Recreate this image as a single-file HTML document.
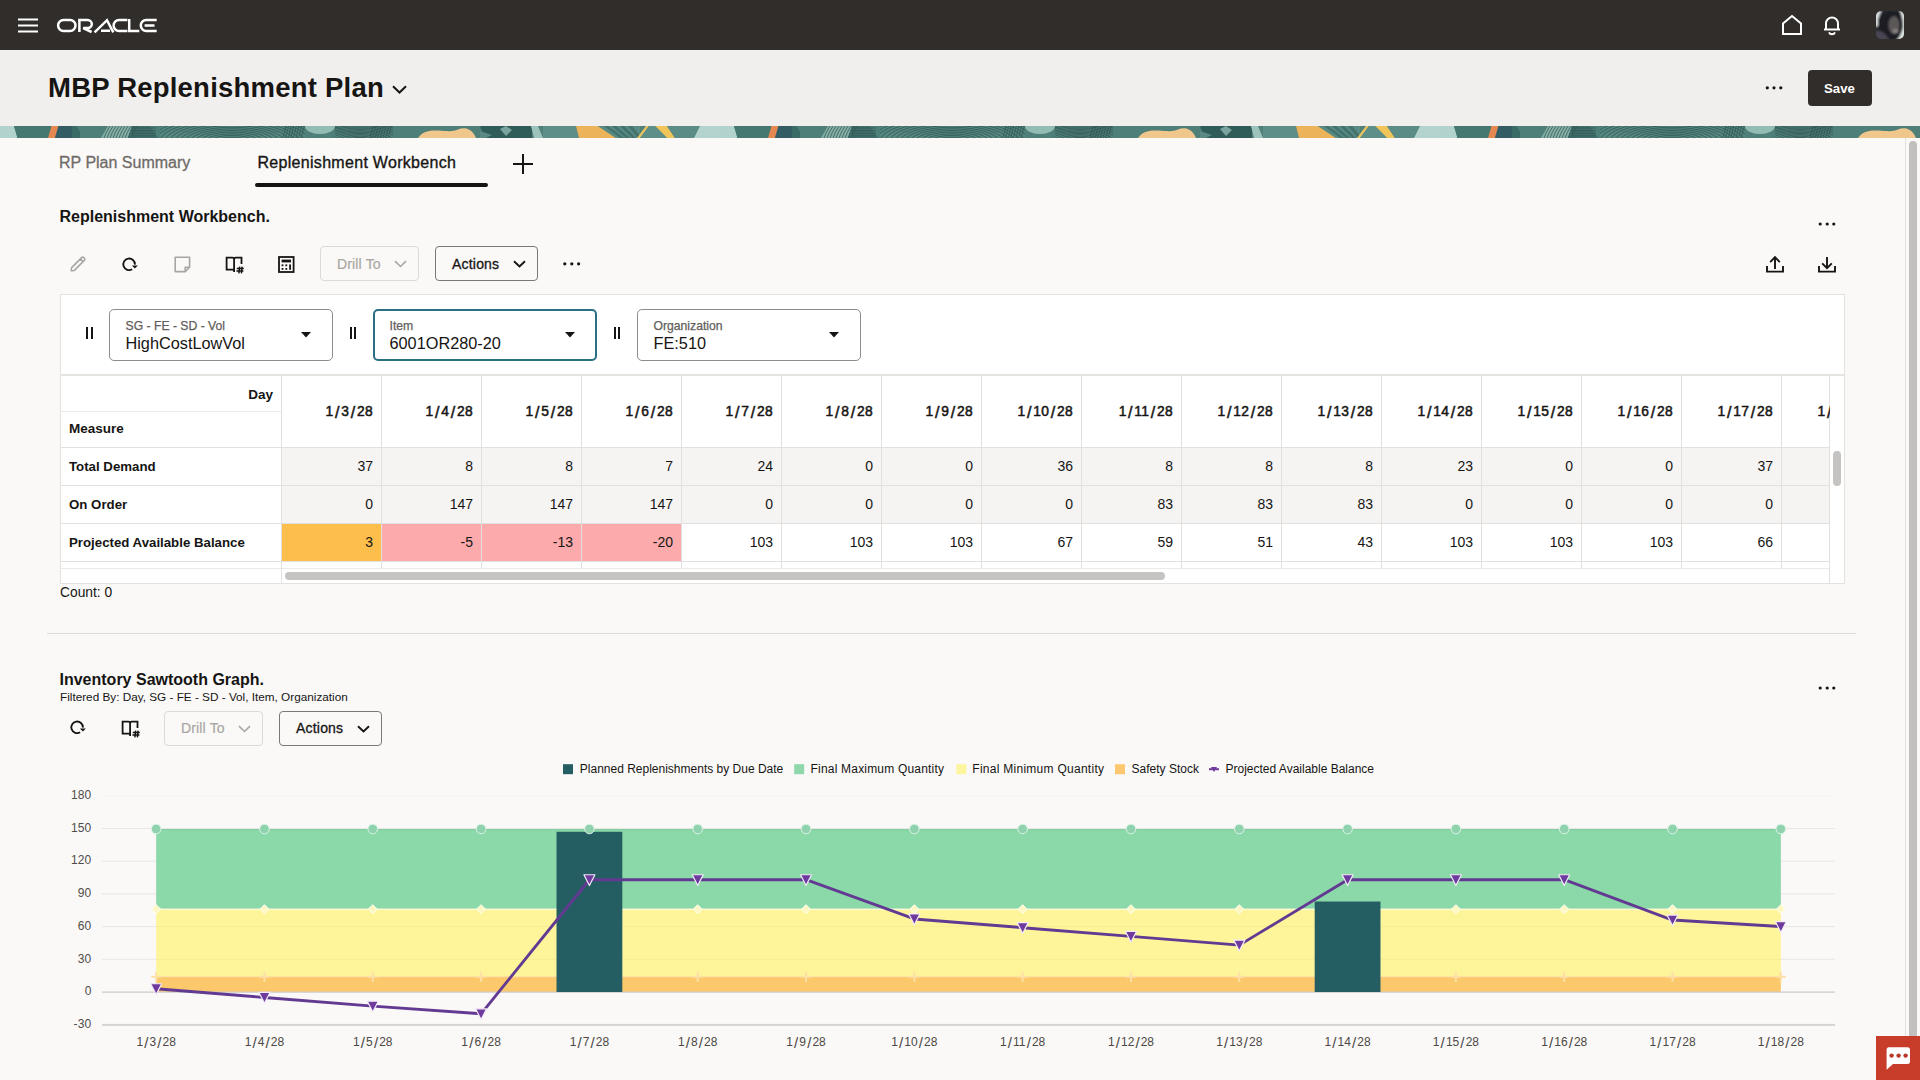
<!DOCTYPE html>
<html><head><meta charset="utf-8">
<style>
*{box-sizing:border-box}
html,body{margin:0;padding:0}
body{width:1920px;height:1080px;overflow:hidden;position:relative;background:#FAF9F8;font-family:"Liberation Sans",sans-serif;color:#161513}
.a{position:absolute}
.t{position:absolute;white-space:nowrap;line-height:1}
svg{position:absolute;overflow:visible}
</style></head><body>
<div class="a" style="left:0;top:0;width:1920px;height:50px;background:#312D2A"></div>
<svg style="left:18px;top:18px" width="20" height="14"><g fill="#fff"><rect x="0" y="0.5" width="20" height="2"/><rect x="0" y="6.5" width="20" height="2"/><rect x="0" y="12.5" width="20" height="2"/></g></svg>
<svg style="left:56px;top:19px" width="102" height="14" viewBox="0 0 102 14"><g fill="none" stroke="#fff" stroke-width="2.5">
<rect x="2.1" y="1.1" width="17.4" height="10.8" rx="5.4"/>
<path d="M23.4 13V1.1h8.4a4 4 0 0 1 0 8H27.2L35.6 13"/>
<path d="M38.6 13.3L51 1.2 57.3 13.3M45 11.8H54"/>
<path d="M71.4 1.1H63a5.4 5.4 0 0 0 0 10.8H71.4"/>
<path d="M73.2 0V11.9H83.3"/>
<path d="M100.7 1.1H90.2a5.4 5.4 0 0 0 0 10.8H100.7M88.6 6.6H98.5"/>
</g></svg>
<svg style="left:1782px;top:15px" width="20" height="20" viewBox="0 0 20 20"><path d="M1 8.5L10 1 19 8.5V19H1Z" fill="none" stroke="#fff" stroke-width="2"/></svg>
<svg style="left:1823px;top:15px" width="18" height="20" viewBox="0 0 18 20"><path d="M1 14.5h16M3 14.5V8.5a6 6 0 0 1 12 0v6" fill="none" stroke="#fff" stroke-width="2"/><path d="M6 17.3a3.3 3.3 0 0 0 6 0" fill="none" stroke="#fff" stroke-width="2"/></svg>
<div class="a" style="left:1876px;top:11px;width:28px;height:28px;border-radius:5px;overflow:hidden;background:#24252a"><svg style="left:0;top:0" width="28" height="28"><defs><filter id="av" x="-20%" y="-20%" width="140%" height="140%"><feGaussianBlur stdDeviation="1.1"/></filter></defs><g filter="url(#av)"><rect x="-2" y="-2" width="32" height="32" fill="#22232a"/><path d="M-2 0H6C3 3 2 9 2.5 15L-2 16Z" fill="#d9dfdf"/><path d="M23 -2H30V30H20C23 27 26 22 27 16C27 10 26 4 23 -2Z" fill="#dfe5e3"/><path d="M21 3C25.5 8 26 17 21.5 25" stroke="#1a1d24" stroke-width="2.4" fill="none"/><path d="M2 8C6 2 14 0 20 2C25 5 25 12 24 18C22 25 18 28 14 30H2Z" fill="#1a1d24"/><ellipse cx="18" cy="14" rx="5.5" ry="9" fill="#5d5859"/><ellipse cx="19.5" cy="20" rx="3" ry="2" fill="#8a8484"/><path d="M-2 20C4 18 10 22 14 30H-2Z" fill="#4a4552"/></g></svg></div>
<div class="a" style="left:0;top:50px;width:1920px;height:76px;background:#F1EFED"></div>
<div class="t" style="left:48px;top:74.12px;font-size:27.5px;color:#161513;font-weight:bold;letter-spacing:0.22px;">MBP Replenishment Plan</div>
<svg style="left:392px;top:85px" width="15" height="9" viewBox="0 0 15 9"><path d="M1 1.2l6.5 6.3 6.5-6.3" fill="none" stroke="#161513" stroke-width="2"/></svg>
<svg style="left:1765px;top:86px" width="18" height="4"><g fill="#161513"><circle cx="2.3" cy="1.8" r="1.6"/><circle cx="9" cy="1.8" r="1.6"/><circle cx="15.8" cy="1.8" r="1.6"/></g></svg>
<div class="a" style="left:1808px;top:70px;width:64px;height:36px;border-radius:4px;background:#312D2A"></div>
<div class="t" style="left:1824px;top:81.58px;font-size:13.2px;color:#fff;font-weight:bold;">Save</div>
<div class="a" id="banner" style="left:0;top:126px;width:1920px;height:11.5px;overflow:hidden;background:#4F7F79"><svg style="left:0;top:0" width="1920" height="12" viewBox="0 0 1920 12"><defs><g id="bp"><rect x="0" y="0" width="720" height="12" fill="#4E7F79"/>
<path d="M0,0 L14,0 L17.5,12 L0,12Z" fill="#B2D2CD" />
<path d="M14,0 L52,0 L48,12 L17.5,12Z" fill="#467872" />
<path d="M51.5,0 L58.5,0 L55,12 L48,12Z" fill="#E4884F" />
<path d="M58.5,0 L72,0 L72,12 L55,12Z" fill="#345C64" />
<path d="M72 0H76A10 12 0 0 1 80 12H72Z" fill="#3B6A67"/>
<path d="M108,0 L132,0 L128,12 L101,12Z" fill="#86AEA7" />
<path d="M132,0 L150,0 L158,12 L128,12Z" fill="#3F6E69" />
<clipPath id="fpA"><rect x="160" y="0" width="145" height="12"/></clipPath>
<clipPath id="fpB"><rect x="335" y="0" width="58" height="12"/></clipPath>
<clipPath id="fpC"><rect x="101" y="0" width="55" height="12"/></clipPath>
<rect x="160" y="0" width="145" height="12" fill="#56887F"/>
<rect x="335" y="0" width="58" height="12" fill="#56887F"/>
<g clip-path="url(#fpA)" fill="none" stroke="#2E5451" stroke-width="0.75"><ellipse cx="232" cy="17" rx="8" ry="2.6"/><ellipse cx="232" cy="17" rx="13" ry="4.3"/><ellipse cx="232" cy="17" rx="18" ry="5.9"/><ellipse cx="232" cy="17" rx="23" ry="7.6"/><ellipse cx="232" cy="17" rx="28" ry="9.2"/><ellipse cx="232" cy="17" rx="33" ry="10.9"/><ellipse cx="232" cy="17" rx="38" ry="12.5"/><ellipse cx="232" cy="17" rx="43" ry="14.2"/><ellipse cx="232" cy="17" rx="48" ry="15.8"/><ellipse cx="232" cy="17" rx="53" ry="17.5"/><ellipse cx="232" cy="17" rx="58" ry="19.1"/><ellipse cx="232" cy="17" rx="63" ry="20.8"/><ellipse cx="232" cy="17" rx="68" ry="22.4"/><ellipse cx="232" cy="17" rx="73" ry="24.1"/><ellipse cx="232" cy="17" rx="78" ry="25.7"/><ellipse cx="232" cy="17" rx="83" ry="27.4"/><ellipse cx="232" cy="17" rx="88" ry="29.0"/><path d="M286.0,0 L283.0,12"/><path d="M288.6,0 L285.6,12"/><path d="M291.2,0 L288.2,12"/><path d="M293.8,0 L290.8,12"/><path d="M296.4,0 L293.4,12"/><path d="M299.0,0 L296.0,12"/><path d="M301.6,0 L298.6,12"/><path d="M304.2,0 L301.2,12"/></g>
<g clip-path="url(#fpB)" fill="none" stroke="#2E5451" stroke-width="0.75"><ellipse cx="360" cy="16" rx="6" ry="2.0"/><ellipse cx="360" cy="16" rx="10" ry="3.3"/><ellipse cx="360" cy="16" rx="14" ry="4.6"/><ellipse cx="360" cy="16" rx="18" ry="5.9"/><ellipse cx="360" cy="16" rx="22" ry="7.3"/><ellipse cx="360" cy="16" rx="26" ry="8.6"/><ellipse cx="360" cy="16" rx="30" ry="9.9"/><ellipse cx="360" cy="16" rx="34" ry="11.2"/><ellipse cx="360" cy="16" rx="38" ry="12.5"/><ellipse cx="360" cy="16" rx="42" ry="13.9"/><ellipse cx="360" cy="16" rx="46" ry="15.2"/><ellipse cx="360" cy="16" rx="50" ry="16.5"/><ellipse cx="360" cy="16" rx="54" ry="17.8"/><ellipse cx="360" cy="16" rx="58" ry="19.1"/><path d="M373.0,0 L370.0,12"/><path d="M375.6,0 L372.6,12"/><path d="M378.2,0 L375.2,12"/><path d="M380.8,0 L377.8,12"/><path d="M383.4,0 L380.4,12"/><path d="M386.0,0 L383.0,12"/><path d="M388.6,0 L385.6,12"/><path d="M391.2,0 L388.2,12"/></g>
<g clip-path="url(#fpC)" fill="none" stroke="#2E5451" stroke-width="0.7"><path d="M110,0 Q106,6 104,12"/><path d="M113,0 Q109,6 107,12"/><path d="M116,0 Q112,6 110,12"/><path d="M119,0 Q115,6 113,12"/><path d="M122,0 Q118,6 116,12"/><path d="M125,0 Q121,6 119,12"/><path d="M128,0 Q124,6 122,12"/><path d="M131,0 Q127,6 125,12"/><path d="M134,0 Q130,6 128,12"/><path d="M137,0 Q133,6 131,12"/><path d="M132,2.0 H156"/><path d="M132,4.6 H156"/><path d="M132,7.2 H156"/><path d="M132,9.8 H156"/></g>
<path d="M305 0H335A15 8 0 0 1 305 0Z" fill="#92BCB4"/>
<path d="M418 12C422 6 428 4 438 4.5S452 6 458 3.5S472 2 476 12Z" fill="#EFC68B"/>
<path d="M480,0 L532,0 L532,12 L485,12Z" fill="#2F5C58" />
<path d="M500,3 L506,0 L512,4 L506,10Z" fill="#7BA49E" />
<path d="M480,5 L492,9 L486,12 L480,12Z" fill="#5B8A84" />
<path d="M531,0 L538,0 L543,12 L534,12Z" fill="#9EC2BC" />
<path d="M543,0 L576,0 L579,12 L543,12Z" fill="#5D8E88" />
<path d="M576,0 L598,0 L616,12 L579,12Z" fill="#ECB35A" />
<path d="M598,0 L640,0 L640,12 L616,12Z" fill="#5A8A84" />
<path d="M604,0 L608,0 L624,12 L620,12Z" fill="#44726D" />
<path d="M612,0 L616,0 L630,12 L626,12Z" fill="#44726D" />
<path d="M620,0 L624,0 L636,12 L632,12Z" fill="#44726D" />
<path d="M628,0 L632,0 L642,12 L638,12Z" fill="#44726D" />
<path d="M646,0 L649,0 L640,12 L637,12Z" fill="#EFC35E" />
<path d="M655,0 L667,0 L675,12 L667,12Z" fill="#F1C45C" />
<path d="M649,0 L655,0 L667,12 L640,12Z" fill="#5E8F89" />
<path d="M667,0 L700,0 L694,12 L675,12Z" fill="#5C8C86" />
<path d="M700,0 L720,0 L720,12 L694,12Z" fill="#B4D3CE" /></g></defs><use href="#bp"/><use href="#bp" x="720"/><use href="#bp" x="1440"/></svg></div>
<div class="t" style="left:59px;top:155.40px;font-size:16px;color:#6F6B68;-webkit-text-stroke:0.3px #6F6B68;">RP Plan Summary</div>
<div class="t" style="left:257.5px;top:155.40px;font-size:16px;color:#161513;letter-spacing:0.3px;-webkit-text-stroke:0.35px #161513;">Replenishment Workbench</div>
<div class="a" style="left:255px;top:183px;width:233px;height:3.5px;border-radius:2px;background:#161513"></div>
<svg style="left:513px;top:154px" width="20" height="20"><path d="M10 0V20M0 10H20" stroke="#161513" stroke-width="2"/></svg>
<div class="t" style="left:59.5px;top:208.60px;font-size:16px;color:#161513;font-weight:bold;">Replenishment Workbench.</div>
<svg style="left:1818px;top:222px" width="18" height="4"><g fill="#161513"><circle cx="2.2" cy="2" r="1.6"/><circle cx="9.2" cy="2" r="1.6"/><circle cx="15.8" cy="2" r="1.6"/></g></svg>
<svg style="left:68.5px;top:255px" width="18" height="18" viewBox="0 0 18 18"><path d="M2.2 15.8l0.4-3.2L12.6 2.6a1.5 1.5 0 0 1 2.1 0l0.7 0.7a1.5 1.5 0 0 1 0 2.1L5.4 15.4Z M11.3 3.9l2.8 2.8" fill="none" stroke="#A8A5A2" stroke-width="1.5" stroke-linejoin="round"/></svg>
<svg style="left:121px;top:257px" width="18" height="16" viewBox="0 0 18 16"><path d="M11.1 12.3A5.8 5.8 0 1 1 13.9 7.6" fill="none" stroke="#161513" stroke-width="1.9"/><path d="M10.9 8.4H16.9L13.9 11.6Z" fill="#161513"/></svg>
<svg style="left:173.5px;top:255.5px" width="18" height="18" viewBox="0 0 18 18"><path d="M1.2 1.2H15.6V11.2L11.2 15.6H1.2Z M15.6 11.2H11.2V15.6" fill="none" stroke="#A8A5A2" stroke-width="1.6" stroke-linejoin="round"/></svg>
<svg style="left:225px;top:255.5px" width="20" height="18" viewBox="0 0 20 18"><path d="M9.1 16.1V3.2Q9.1 1.6 7.5 1.6H1.6V13.6H7.5Q9.1 13.6 9.1 15.2M9.1 3.2Q9.1 1.6 10.7 1.6H16.5V8" fill="none" stroke="#161513" stroke-width="1.8"/><path d="M14.6 10.6l-0.7 6.7M17.1 10.6l-0.7 6.7M11.8 12.6H18.8M11.4 15H18.4" stroke="#161513" stroke-width="1.5"/></svg>
<svg style="left:278px;top:256px" width="17" height="17" viewBox="0 0 17 17"><rect x="1" y="1" width="14.6" height="15" fill="none" stroke="#161513" stroke-width="1.8"/><rect x="3.6" y="3.6" width="9.4" height="2.8" fill="#161513"/><g fill="#161513"><rect x="3.6" y="8.4" width="1.8" height="1.8"/><rect x="7.4" y="8.4" width="1.8" height="1.8"/><rect x="11.2" y="8.4" width="1.8" height="5.4"/><rect x="3.6" y="12" width="1.8" height="1.8"/><rect x="7.4" y="12" width="1.8" height="1.8"/></g></svg>
<div class="a" style="left:320px;top:246px;width:99px;height:35px;border:1px solid #DCD9D6;border-radius:4px;background:#FAF9F8"></div>
<div class="t" style="left:337px;top:256.80px;font-size:14px;color:#A9A6A3;letter-spacing:0.15px;-webkit-text-stroke:0.2px #A9A6A3;">Drill To</div>
<svg style="left:393.5px;top:260px" width="13" height="8"><path d="M1 1.2l5.5 5.3 5.5-5.3" fill="none" stroke="#A9A6A3" stroke-width="1.6"/></svg>
<div class="a" style="left:435px;top:246px;width:103px;height:35px;border:1px solid #7D7874;border-radius:4px;background:#FAF9F8"></div>
<div class="t" style="left:452px;top:256.80px;font-size:14px;color:#161513;letter-spacing:0.2px;-webkit-text-stroke:0.3px #161513;">Actions</div>
<svg style="left:512.5px;top:260px" width="13" height="8"><path d="M1 1.2l5.5 5.3 5.5-5.3" fill="none" stroke="#161513" stroke-width="1.9"/></svg>
<svg style="left:563px;top:262px" width="18" height="4"><g fill="#161513"><circle cx="1.8" cy="1.8" r="1.6"/><circle cx="8.8" cy="1.8" r="1.6"/><circle cx="15.6" cy="1.8" r="1.6"/></g></svg>
<svg style="left:1766px;top:256px" width="18" height="17" viewBox="0 0 18 17"><path d="M1 10V15.6H17V10" fill="none" stroke="#161513" stroke-width="1.9"/><path d="M9 13V2" stroke="#161513" stroke-width="1.9"/><path d="M4.2 6.2L9 1.2 13.8 6.2" fill="none" stroke="#161513" stroke-width="1.9"/></svg>
<svg style="left:1818px;top:256px" width="18" height="17" viewBox="0 0 18 17"><path d="M1 10V15.6H17V10" fill="none" stroke="#161513" stroke-width="1.9"/><path d="M9 1V12" stroke="#161513" stroke-width="1.9"/><path d="M4.2 7.4L9 12.2 13.8 7.4" fill="none" stroke="#161513" stroke-width="1.9"/></svg>
<div class="a" style="left:60px;top:294px;width:1785px;height:290px;background:#fff;border:1px solid #E4E2DF"></div>
<div class="a" style="left:61px;top:374px;width:1783px;height:2px;background:#E6E4E1"></div>
<div class="a" style="left:86px;top:327px;width:2px;height:12px;background:#161513"></div><div class="a" style="left:90.5px;top:327px;width:2px;height:12px;background:#161513"></div>
<div class="a" style="left:109px;top:309px;width:224px;height:52px;border:1px solid #8F8B87;border-radius:5px;background:#fff"></div>
<div class="t" style="left:125.5px;top:319.93px;font-size:12.2px;color:#625E5B;-webkit-text-stroke:0.25px #625E5B;">SG - FE - SD - Vol</div>
<div class="t" style="left:125.5px;top:335.14px;font-size:16.3px;color:#161513;">HighCostLowVol</div>
<svg style="left:301px;top:332px" width="10" height="6"><path d="M0 0H10L5 5.5Z" fill="#161513"/></svg>
<div class="a" style="left:349.5px;top:327px;width:2px;height:12px;background:#161513"></div><div class="a" style="left:354.0px;top:327px;width:2px;height:12px;background:#161513"></div>
<div class="a" style="left:373px;top:309px;width:224px;height:52px;border:2px solid #2B6F85;border-radius:5px;background:#fff"></div>
<div class="t" style="left:389.5px;top:319.93px;font-size:12.2px;color:#625E5B;-webkit-text-stroke:0.25px #625E5B;">Item</div>
<div class="t" style="left:389.5px;top:335.14px;font-size:16.3px;color:#161513;">6001OR280-20</div>
<svg style="left:565px;top:332px" width="10" height="6"><path d="M0 0H10L5 5.5Z" fill="#161513"/></svg>
<div class="a" style="left:613.5px;top:327px;width:2px;height:12px;background:#161513"></div><div class="a" style="left:618.0px;top:327px;width:2px;height:12px;background:#161513"></div>
<div class="a" style="left:637px;top:309px;width:224px;height:52px;border:1px solid #8F8B87;border-radius:5px;background:#fff"></div>
<div class="t" style="left:653.5px;top:319.93px;font-size:12.2px;color:#625E5B;-webkit-text-stroke:0.25px #625E5B;">Organization</div>
<div class="t" style="left:653.5px;top:335.14px;font-size:16.3px;color:#161513;">FE:510</div>
<svg style="left:829px;top:332px" width="10" height="6"><path d="M0 0H10L5 5.5Z" fill="#161513"/></svg>
<div class="a" style="left:61px;top:411px;width:220px;height:1px;background:#ECEAE8"></div>
<div class="t" style="left:-127px;width:400px;text-align:right;top:387.52px;font-size:13.5px;color:#161513;font-weight:bold;">Day</div>
<div class="t" style="left:69px;top:422.02px;font-size:13.5px;color:#161513;font-weight:bold;">Measure</div>
<div class="a" style="left:61px;top:376px;width:1769px;height:207px;overflow:hidden">
<div class="a" style="left:220px;top:71px;width:100px;height:38px;background:#F5F4F3"></div>
<div class="a" style="left:220px;top:109px;width:100px;height:38px;background:#F5F4F3"></div>
<div class="a" style="left:220px;top:147px;width:100px;height:38px;background:#FDBE4B"></div>
<div class="a" style="left:320px;top:71px;width:100px;height:38px;background:#F5F4F3"></div>
<div class="a" style="left:320px;top:109px;width:100px;height:38px;background:#F5F4F3"></div>
<div class="a" style="left:320px;top:147px;width:100px;height:38px;background:#FCAAAB"></div>
<div class="a" style="left:420px;top:71px;width:100px;height:38px;background:#F5F4F3"></div>
<div class="a" style="left:420px;top:109px;width:100px;height:38px;background:#F5F4F3"></div>
<div class="a" style="left:420px;top:147px;width:100px;height:38px;background:#FCAAAB"></div>
<div class="a" style="left:520px;top:71px;width:100px;height:38px;background:#F5F4F3"></div>
<div class="a" style="left:520px;top:109px;width:100px;height:38px;background:#F5F4F3"></div>
<div class="a" style="left:520px;top:147px;width:100px;height:38px;background:#FCAAAB"></div>
<div class="a" style="left:620px;top:71px;width:100px;height:38px;background:#F5F4F3"></div>
<div class="a" style="left:620px;top:109px;width:100px;height:38px;background:#F5F4F3"></div>
<div class="a" style="left:620px;top:147px;width:100px;height:38px;background:#FFFFFF"></div>
<div class="a" style="left:720px;top:71px;width:100px;height:38px;background:#F5F4F3"></div>
<div class="a" style="left:720px;top:109px;width:100px;height:38px;background:#F5F4F3"></div>
<div class="a" style="left:720px;top:147px;width:100px;height:38px;background:#FFFFFF"></div>
<div class="a" style="left:820px;top:71px;width:100px;height:38px;background:#F5F4F3"></div>
<div class="a" style="left:820px;top:109px;width:100px;height:38px;background:#F5F4F3"></div>
<div class="a" style="left:820px;top:147px;width:100px;height:38px;background:#FFFFFF"></div>
<div class="a" style="left:920px;top:71px;width:100px;height:38px;background:#F5F4F3"></div>
<div class="a" style="left:920px;top:109px;width:100px;height:38px;background:#F5F4F3"></div>
<div class="a" style="left:920px;top:147px;width:100px;height:38px;background:#FFFFFF"></div>
<div class="a" style="left:1020px;top:71px;width:100px;height:38px;background:#F5F4F3"></div>
<div class="a" style="left:1020px;top:109px;width:100px;height:38px;background:#F5F4F3"></div>
<div class="a" style="left:1020px;top:147px;width:100px;height:38px;background:#FFFFFF"></div>
<div class="a" style="left:1120px;top:71px;width:100px;height:38px;background:#F5F4F3"></div>
<div class="a" style="left:1120px;top:109px;width:100px;height:38px;background:#F5F4F3"></div>
<div class="a" style="left:1120px;top:147px;width:100px;height:38px;background:#FFFFFF"></div>
<div class="a" style="left:1220px;top:71px;width:100px;height:38px;background:#F5F4F3"></div>
<div class="a" style="left:1220px;top:109px;width:100px;height:38px;background:#F5F4F3"></div>
<div class="a" style="left:1220px;top:147px;width:100px;height:38px;background:#FFFFFF"></div>
<div class="a" style="left:1320px;top:71px;width:100px;height:38px;background:#F5F4F3"></div>
<div class="a" style="left:1320px;top:109px;width:100px;height:38px;background:#F5F4F3"></div>
<div class="a" style="left:1320px;top:147px;width:100px;height:38px;background:#FFFFFF"></div>
<div class="a" style="left:1420px;top:71px;width:100px;height:38px;background:#F5F4F3"></div>
<div class="a" style="left:1420px;top:109px;width:100px;height:38px;background:#F5F4F3"></div>
<div class="a" style="left:1420px;top:147px;width:100px;height:38px;background:#FFFFFF"></div>
<div class="a" style="left:1520px;top:71px;width:100px;height:38px;background:#F5F4F3"></div>
<div class="a" style="left:1520px;top:109px;width:100px;height:38px;background:#F5F4F3"></div>
<div class="a" style="left:1520px;top:147px;width:100px;height:38px;background:#FFFFFF"></div>
<div class="a" style="left:1620px;top:71px;width:100px;height:38px;background:#F5F4F3"></div>
<div class="a" style="left:1620px;top:109px;width:100px;height:38px;background:#F5F4F3"></div>
<div class="a" style="left:1620px;top:147px;width:100px;height:38px;background:#FFFFFF"></div>
<div class="a" style="left:1720px;top:71px;width:100px;height:38px;background:#F5F4F3"></div>
<div class="a" style="left:1720px;top:109px;width:100px;height:38px;background:#F5F4F3"></div>
<div class="a" style="left:1720px;top:147px;width:100px;height:38px;background:#FFFFFF"></div>
<div class="a" style="left:220px;top:0;width:1px;height:192px;background:#E2E0DE"></div>
<div class="a" style="left:320px;top:0;width:1px;height:192px;background:#E2E0DE"></div>
<div class="a" style="left:420px;top:0;width:1px;height:192px;background:#E2E0DE"></div>
<div class="a" style="left:520px;top:0;width:1px;height:192px;background:#E2E0DE"></div>
<div class="a" style="left:620px;top:0;width:1px;height:192px;background:#E2E0DE"></div>
<div class="a" style="left:720px;top:0;width:1px;height:192px;background:#E2E0DE"></div>
<div class="a" style="left:820px;top:0;width:1px;height:192px;background:#E2E0DE"></div>
<div class="a" style="left:920px;top:0;width:1px;height:192px;background:#E2E0DE"></div>
<div class="a" style="left:1020px;top:0;width:1px;height:192px;background:#E2E0DE"></div>
<div class="a" style="left:1120px;top:0;width:1px;height:192px;background:#E2E0DE"></div>
<div class="a" style="left:1220px;top:0;width:1px;height:192px;background:#E2E0DE"></div>
<div class="a" style="left:1320px;top:0;width:1px;height:192px;background:#E2E0DE"></div>
<div class="a" style="left:1420px;top:0;width:1px;height:192px;background:#E2E0DE"></div>
<div class="a" style="left:1520px;top:0;width:1px;height:192px;background:#E2E0DE"></div>
<div class="a" style="left:1620px;top:0;width:1px;height:192px;background:#E2E0DE"></div>
<div class="a" style="left:1720px;top:0;width:1px;height:192px;background:#E2E0DE"></div>
<div class="a" style="left:1820px;top:0;width:1px;height:192px;background:#E2E0DE"></div>
<div class="a" style="left:0;top:71px;width:1769px;height:1px;background:#E2E0DE"></div>
<div class="a" style="left:0;top:109px;width:1769px;height:1px;background:#E2E0DE"></div>
<div class="a" style="left:0;top:147px;width:1769px;height:1px;background:#E2E0DE"></div>
<div class="a" style="left:0;top:185px;width:1769px;height:1px;background:#E2E0DE"></div>
<div class="a" style="left:0;top:192px;width:1769px;height:1px;background:#E2E0DE"></div>
<div class="a" style="left:0;top:192px;width:1769px;height:1px;background:#ECEAE8"></div>
<div class="a" style="left:1768px;top:0;width:1px;height:207px;background:#E2E0DE"></div>
<div class="a" style="left:220px;top:0;width:1px;height:207px;background:#E2E0DE"></div>
</div>
<div class="a" style="left:281px;top:376px;width:1549px;height:192px;overflow:hidden">
<div class="t" style="left:-308px;width:400px;text-align:right;top:29.27px;font-size:13.8px;color:#161513;letter-spacing:0.3px;-webkit-text-stroke:0.5px #161513;">1<span style="font-size:16px;line-height:0;font-weight:normal;margin:0 1.5px;position:relative;top:1.6px">/</span>3<span style="font-size:16px;line-height:0;font-weight:normal;margin:0 1.5px;position:relative;top:1.6px">/</span>28</div>
<div class="t" style="left:-308px;width:400px;text-align:right;top:83.10px;font-size:14px;color:#161513;">37</div>
<div class="t" style="left:-308px;width:400px;text-align:right;top:121.10px;font-size:14px;color:#161513;">0</div>
<div class="t" style="left:-308px;width:400px;text-align:right;top:159.10px;font-size:14px;color:#161513;">3</div>
<div class="t" style="left:-208px;width:400px;text-align:right;top:29.27px;font-size:13.8px;color:#161513;letter-spacing:0.3px;-webkit-text-stroke:0.5px #161513;">1<span style="font-size:16px;line-height:0;font-weight:normal;margin:0 1.5px;position:relative;top:1.6px">/</span>4<span style="font-size:16px;line-height:0;font-weight:normal;margin:0 1.5px;position:relative;top:1.6px">/</span>28</div>
<div class="t" style="left:-208px;width:400px;text-align:right;top:83.10px;font-size:14px;color:#161513;">8</div>
<div class="t" style="left:-208px;width:400px;text-align:right;top:121.10px;font-size:14px;color:#161513;">147</div>
<div class="t" style="left:-208px;width:400px;text-align:right;top:159.10px;font-size:14px;color:#161513;">-5</div>
<div class="t" style="left:-108px;width:400px;text-align:right;top:29.27px;font-size:13.8px;color:#161513;letter-spacing:0.3px;-webkit-text-stroke:0.5px #161513;">1<span style="font-size:16px;line-height:0;font-weight:normal;margin:0 1.5px;position:relative;top:1.6px">/</span>5<span style="font-size:16px;line-height:0;font-weight:normal;margin:0 1.5px;position:relative;top:1.6px">/</span>28</div>
<div class="t" style="left:-108px;width:400px;text-align:right;top:83.10px;font-size:14px;color:#161513;">8</div>
<div class="t" style="left:-108px;width:400px;text-align:right;top:121.10px;font-size:14px;color:#161513;">147</div>
<div class="t" style="left:-108px;width:400px;text-align:right;top:159.10px;font-size:14px;color:#161513;">-13</div>
<div class="t" style="left:-8px;width:400px;text-align:right;top:29.27px;font-size:13.8px;color:#161513;letter-spacing:0.3px;-webkit-text-stroke:0.5px #161513;">1<span style="font-size:16px;line-height:0;font-weight:normal;margin:0 1.5px;position:relative;top:1.6px">/</span>6<span style="font-size:16px;line-height:0;font-weight:normal;margin:0 1.5px;position:relative;top:1.6px">/</span>28</div>
<div class="t" style="left:-8px;width:400px;text-align:right;top:83.10px;font-size:14px;color:#161513;">7</div>
<div class="t" style="left:-8px;width:400px;text-align:right;top:121.10px;font-size:14px;color:#161513;">147</div>
<div class="t" style="left:-8px;width:400px;text-align:right;top:159.10px;font-size:14px;color:#161513;">-20</div>
<div class="t" style="left:92px;width:400px;text-align:right;top:29.27px;font-size:13.8px;color:#161513;letter-spacing:0.3px;-webkit-text-stroke:0.5px #161513;">1<span style="font-size:16px;line-height:0;font-weight:normal;margin:0 1.5px;position:relative;top:1.6px">/</span>7<span style="font-size:16px;line-height:0;font-weight:normal;margin:0 1.5px;position:relative;top:1.6px">/</span>28</div>
<div class="t" style="left:92px;width:400px;text-align:right;top:83.10px;font-size:14px;color:#161513;">24</div>
<div class="t" style="left:92px;width:400px;text-align:right;top:121.10px;font-size:14px;color:#161513;">0</div>
<div class="t" style="left:92px;width:400px;text-align:right;top:159.10px;font-size:14px;color:#161513;">103</div>
<div class="t" style="left:192px;width:400px;text-align:right;top:29.27px;font-size:13.8px;color:#161513;letter-spacing:0.3px;-webkit-text-stroke:0.5px #161513;">1<span style="font-size:16px;line-height:0;font-weight:normal;margin:0 1.5px;position:relative;top:1.6px">/</span>8<span style="font-size:16px;line-height:0;font-weight:normal;margin:0 1.5px;position:relative;top:1.6px">/</span>28</div>
<div class="t" style="left:192px;width:400px;text-align:right;top:83.10px;font-size:14px;color:#161513;">0</div>
<div class="t" style="left:192px;width:400px;text-align:right;top:121.10px;font-size:14px;color:#161513;">0</div>
<div class="t" style="left:192px;width:400px;text-align:right;top:159.10px;font-size:14px;color:#161513;">103</div>
<div class="t" style="left:292px;width:400px;text-align:right;top:29.27px;font-size:13.8px;color:#161513;letter-spacing:0.3px;-webkit-text-stroke:0.5px #161513;">1<span style="font-size:16px;line-height:0;font-weight:normal;margin:0 1.5px;position:relative;top:1.6px">/</span>9<span style="font-size:16px;line-height:0;font-weight:normal;margin:0 1.5px;position:relative;top:1.6px">/</span>28</div>
<div class="t" style="left:292px;width:400px;text-align:right;top:83.10px;font-size:14px;color:#161513;">0</div>
<div class="t" style="left:292px;width:400px;text-align:right;top:121.10px;font-size:14px;color:#161513;">0</div>
<div class="t" style="left:292px;width:400px;text-align:right;top:159.10px;font-size:14px;color:#161513;">103</div>
<div class="t" style="left:392px;width:400px;text-align:right;top:29.27px;font-size:13.8px;color:#161513;letter-spacing:0.3px;-webkit-text-stroke:0.5px #161513;">1<span style="font-size:16px;line-height:0;font-weight:normal;margin:0 1.5px;position:relative;top:1.6px">/</span>10<span style="font-size:16px;line-height:0;font-weight:normal;margin:0 1.5px;position:relative;top:1.6px">/</span>28</div>
<div class="t" style="left:392px;width:400px;text-align:right;top:83.10px;font-size:14px;color:#161513;">36</div>
<div class="t" style="left:392px;width:400px;text-align:right;top:121.10px;font-size:14px;color:#161513;">0</div>
<div class="t" style="left:392px;width:400px;text-align:right;top:159.10px;font-size:14px;color:#161513;">67</div>
<div class="t" style="left:492px;width:400px;text-align:right;top:29.27px;font-size:13.8px;color:#161513;letter-spacing:0.3px;-webkit-text-stroke:0.5px #161513;">1<span style="font-size:16px;line-height:0;font-weight:normal;margin:0 1.5px;position:relative;top:1.6px">/</span>11<span style="font-size:16px;line-height:0;font-weight:normal;margin:0 1.5px;position:relative;top:1.6px">/</span>28</div>
<div class="t" style="left:492px;width:400px;text-align:right;top:83.10px;font-size:14px;color:#161513;">8</div>
<div class="t" style="left:492px;width:400px;text-align:right;top:121.10px;font-size:14px;color:#161513;">83</div>
<div class="t" style="left:492px;width:400px;text-align:right;top:159.10px;font-size:14px;color:#161513;">59</div>
<div class="t" style="left:592px;width:400px;text-align:right;top:29.27px;font-size:13.8px;color:#161513;letter-spacing:0.3px;-webkit-text-stroke:0.5px #161513;">1<span style="font-size:16px;line-height:0;font-weight:normal;margin:0 1.5px;position:relative;top:1.6px">/</span>12<span style="font-size:16px;line-height:0;font-weight:normal;margin:0 1.5px;position:relative;top:1.6px">/</span>28</div>
<div class="t" style="left:592px;width:400px;text-align:right;top:83.10px;font-size:14px;color:#161513;">8</div>
<div class="t" style="left:592px;width:400px;text-align:right;top:121.10px;font-size:14px;color:#161513;">83</div>
<div class="t" style="left:592px;width:400px;text-align:right;top:159.10px;font-size:14px;color:#161513;">51</div>
<div class="t" style="left:692px;width:400px;text-align:right;top:29.27px;font-size:13.8px;color:#161513;letter-spacing:0.3px;-webkit-text-stroke:0.5px #161513;">1<span style="font-size:16px;line-height:0;font-weight:normal;margin:0 1.5px;position:relative;top:1.6px">/</span>13<span style="font-size:16px;line-height:0;font-weight:normal;margin:0 1.5px;position:relative;top:1.6px">/</span>28</div>
<div class="t" style="left:692px;width:400px;text-align:right;top:83.10px;font-size:14px;color:#161513;">8</div>
<div class="t" style="left:692px;width:400px;text-align:right;top:121.10px;font-size:14px;color:#161513;">83</div>
<div class="t" style="left:692px;width:400px;text-align:right;top:159.10px;font-size:14px;color:#161513;">43</div>
<div class="t" style="left:792px;width:400px;text-align:right;top:29.27px;font-size:13.8px;color:#161513;letter-spacing:0.3px;-webkit-text-stroke:0.5px #161513;">1<span style="font-size:16px;line-height:0;font-weight:normal;margin:0 1.5px;position:relative;top:1.6px">/</span>14<span style="font-size:16px;line-height:0;font-weight:normal;margin:0 1.5px;position:relative;top:1.6px">/</span>28</div>
<div class="t" style="left:792px;width:400px;text-align:right;top:83.10px;font-size:14px;color:#161513;">23</div>
<div class="t" style="left:792px;width:400px;text-align:right;top:121.10px;font-size:14px;color:#161513;">0</div>
<div class="t" style="left:792px;width:400px;text-align:right;top:159.10px;font-size:14px;color:#161513;">103</div>
<div class="t" style="left:892px;width:400px;text-align:right;top:29.27px;font-size:13.8px;color:#161513;letter-spacing:0.3px;-webkit-text-stroke:0.5px #161513;">1<span style="font-size:16px;line-height:0;font-weight:normal;margin:0 1.5px;position:relative;top:1.6px">/</span>15<span style="font-size:16px;line-height:0;font-weight:normal;margin:0 1.5px;position:relative;top:1.6px">/</span>28</div>
<div class="t" style="left:892px;width:400px;text-align:right;top:83.10px;font-size:14px;color:#161513;">0</div>
<div class="t" style="left:892px;width:400px;text-align:right;top:121.10px;font-size:14px;color:#161513;">0</div>
<div class="t" style="left:892px;width:400px;text-align:right;top:159.10px;font-size:14px;color:#161513;">103</div>
<div class="t" style="left:992px;width:400px;text-align:right;top:29.27px;font-size:13.8px;color:#161513;letter-spacing:0.3px;-webkit-text-stroke:0.5px #161513;">1<span style="font-size:16px;line-height:0;font-weight:normal;margin:0 1.5px;position:relative;top:1.6px">/</span>16<span style="font-size:16px;line-height:0;font-weight:normal;margin:0 1.5px;position:relative;top:1.6px">/</span>28</div>
<div class="t" style="left:992px;width:400px;text-align:right;top:83.10px;font-size:14px;color:#161513;">0</div>
<div class="t" style="left:992px;width:400px;text-align:right;top:121.10px;font-size:14px;color:#161513;">0</div>
<div class="t" style="left:992px;width:400px;text-align:right;top:159.10px;font-size:14px;color:#161513;">103</div>
<div class="t" style="left:1092px;width:400px;text-align:right;top:29.27px;font-size:13.8px;color:#161513;letter-spacing:0.3px;-webkit-text-stroke:0.5px #161513;">1<span style="font-size:16px;line-height:0;font-weight:normal;margin:0 1.5px;position:relative;top:1.6px">/</span>17<span style="font-size:16px;line-height:0;font-weight:normal;margin:0 1.5px;position:relative;top:1.6px">/</span>28</div>
<div class="t" style="left:1092px;width:400px;text-align:right;top:83.10px;font-size:14px;color:#161513;">37</div>
<div class="t" style="left:1092px;width:400px;text-align:right;top:121.10px;font-size:14px;color:#161513;">0</div>
<div class="t" style="left:1092px;width:400px;text-align:right;top:159.10px;font-size:14px;color:#161513;">66</div>
<div class="t" style="left:1192px;width:400px;text-align:right;top:29.27px;font-size:13.8px;color:#161513;letter-spacing:0.3px;-webkit-text-stroke:0.5px #161513;">1<span style="font-size:16px;line-height:0;font-weight:normal;margin:0 1.5px;position:relative;top:1.6px">/</span>18<span style="font-size:16px;line-height:0;font-weight:normal;margin:0 1.5px;position:relative;top:1.6px">/</span>28</div>
<div class="t" style="left:1192px;width:400px;text-align:right;top:83.10px;font-size:14px;color:#161513;">0</div>
<div class="t" style="left:1192px;width:400px;text-align:right;top:121.10px;font-size:14px;color:#161513;">0</div>
<div class="t" style="left:1192px;width:400px;text-align:right;top:159.10px;font-size:14px;color:#161513;">60</div>
</div>
<div class="t" style="left:69px;top:459.74px;font-size:13.25px;color:#161513;font-weight:bold;">Total Demand</div>
<div class="t" style="left:69px;top:497.74px;font-size:13.25px;color:#161513;font-weight:bold;">On Order</div>
<div class="t" style="left:69px;top:535.74px;font-size:13.25px;color:#161513;font-weight:bold;">Projected Available Balance</div>
<div class="a" style="left:285px;top:572px;width:880px;height:8px;border-radius:4px;background:#C6C4C2"></div>
<div class="a" style="left:1833px;top:451px;width:8px;height:35px;border-radius:4px;background:#C6C4C2"></div>
<div class="t" style="left:60px;top:586.07px;font-size:13.8px;color:#161513;">Count: 0</div>
<div class="a" style="left:47px;top:633px;width:1809px;height:1px;background:#DEDCD9"></div>
<div class="t" style="left:59.5px;top:671.80px;font-size:16px;color:#161513;font-weight:bold;">Inventory Sawtooth Graph.</div>
<div class="t" style="left:60px;top:691.01px;font-size:11.75px;color:#161513;">Filtered By: Day, SG - FE - SD - Vol, Item, Organization</div>
<svg style="left:1818px;top:686px" width="18" height="4"><g fill="#161513"><circle cx="2.2" cy="2" r="1.6"/><circle cx="9.2" cy="2" r="1.6"/><circle cx="15.8" cy="2" r="1.6"/></g></svg>
<svg style="left:69.2px;top:720.4px" width="18" height="16" viewBox="0 0 18 16"><path d="M11.1 12.3A5.8 5.8 0 1 1 13.9 7.6" fill="none" stroke="#161513" stroke-width="1.9"/><path d="M10.9 8.4H16.9L13.9 11.6Z" fill="#161513"/></svg>
<svg style="left:121px;top:719.5px" width="20" height="18" viewBox="0 0 20 18"><path d="M9.1 16.1V3.2Q9.1 1.6 7.5 1.6H1.6V13.6H7.5Q9.1 13.6 9.1 15.2M9.1 3.2Q9.1 1.6 10.7 1.6H16.5V8" fill="none" stroke="#161513" stroke-width="1.8"/><path d="M14.6 10.6l-0.7 6.7M17.1 10.6l-0.7 6.7M11.8 12.6H18.8M11.4 15H18.4" stroke="#161513" stroke-width="1.5"/></svg>
<div class="a" style="left:164px;top:710.5px;width:99px;height:35px;border:1px solid #DCD9D6;border-radius:4px;background:#FAF9F8"></div>
<div class="t" style="left:181px;top:721.30px;font-size:14px;color:#A9A6A3;letter-spacing:0.15px;-webkit-text-stroke:0.2px #A9A6A3;">Drill To</div>
<svg style="left:237.5px;top:724.5px" width="13" height="8"><path d="M1 1.2l5.5 5.3 5.5-5.3" fill="none" stroke="#A9A6A3" stroke-width="1.6"/></svg>
<div class="a" style="left:279px;top:710.5px;width:103px;height:35px;border:1px solid #7D7874;border-radius:4px;background:#FAF9F8"></div>
<div class="t" style="left:296px;top:721.30px;font-size:14px;color:#161513;letter-spacing:0.2px;-webkit-text-stroke:0.3px #161513;">Actions</div>
<svg style="left:356.5px;top:724.5px" width="13" height="8"><path d="M1 1.2l5.5 5.3 5.5-5.3" fill="none" stroke="#161513" stroke-width="1.9"/></svg>
<svg style="left:0;top:0" width="1920" height="1080">
<rect x="563" y="764.2" width="10" height="10" fill="#245E63"/>
<rect x="794.2" y="764.2" width="10" height="10" fill="#8ED8AC"/>
<rect x="956.4" y="764.2" width="10" height="10" fill="#FDF59E"/>
<rect x="1115" y="764.2" width="10" height="10" fill="#FDC870"/>
<rect x="1209" y="768.2" width="10" height="2" fill="#6F3A9E"/><path d="M1211 767H1217L1214 772Z" fill="#6F3A9E"/>
<text x="579.8" y="773.3" font-size="12" fill="#161513" font-family="Liberation Sans" letter-spacing="0">Planned Replenishments by Due Date</text>
<text x="810.6" y="773.3" font-size="12" fill="#161513" font-family="Liberation Sans" letter-spacing="0.19">Final Maximum Quantity</text>
<text x="972.3" y="773.3" font-size="12" fill="#161513" font-family="Liberation Sans" letter-spacing="0.27">Final Minimum Quantity</text>
<text x="1131.6000000000001" y="773.3" font-size="12" fill="#161513" font-family="Liberation Sans" letter-spacing="0">Safety Stock</text>
<text x="1225.5" y="773.3" font-size="12" fill="#161513" font-family="Liberation Sans" letter-spacing="0">Projected Available Balance</text>
<rect x="102.0" y="795.30" width="1733.0" height="1" fill="#F4F3F1"/>
<rect x="102.0" y="828.00" width="1733.0" height="1" fill="#E9E7E4"/>
<rect x="102.0" y="860.70" width="1733.0" height="1" fill="#E9E7E4"/>
<rect x="102.0" y="893.40" width="1733.0" height="1" fill="#E9E7E4"/>
<rect x="102.0" y="926.10" width="1733.0" height="1" fill="#E9E7E4"/>
<rect x="102.0" y="958.80" width="1733.0" height="1" fill="#E9E7E4"/>
<rect x="156.16" y="829.30" width="1624.69" height="79.86" fill="#8BD8A9"/>
<rect x="156.16" y="909.16" width="1624.69" height="67.58" fill="#FEF59B"/>
<rect x="156.16" y="976.74" width="1624.69" height="15.26" fill="#FCC86C"/>
<rect x="156.16" y="829.10" width="1624.69" height="1.2" fill="#80CC9F"/>
<rect x="156.16" y="908.56" width="1624.69" height="1.2" fill="#FFFBE0"/>
<rect x="156.16" y="976.14" width="1624.69" height="1" fill="#FDE3A6"/>
<rect x="156.16" y="926.10" width="1624.69" height="1" fill="#000" fill-opacity="0.035"/>
<rect x="156.16" y="958.80" width="1624.69" height="1" fill="#000" fill-opacity="0.035"/>
<rect x="102.0" y="991.50" width="1733.0" height="1.2" fill="#CBC8C5"/>
<rect x="102.0" y="1023.90" width="1733.0" height="2" fill="#D5D2CF"/>
<path d="M156.16 904.66L160.66 909.16L156.16 913.66L151.66 909.16Z" fill="#FFF8C4" stroke="#FFFEF0" stroke-width="1"/>
<path d="M156.16 971.74V981.74M151.16 976.74H161.16" stroke="#FDE0A6" stroke-width="2"/>
<path d="M264.47 904.66L268.97 909.16L264.47 913.66L259.97 909.16Z" fill="#FFF8C4" stroke="#FFFEF0" stroke-width="1"/>
<path d="M264.47 971.74V981.74M259.47 976.74H269.47" stroke="#FDE0A6" stroke-width="2"/>
<path d="M372.78 904.66L377.28 909.16L372.78 913.66L368.28 909.16Z" fill="#FFF8C4" stroke="#FFFEF0" stroke-width="1"/>
<path d="M372.78 971.74V981.74M367.78 976.74H377.78" stroke="#FDE0A6" stroke-width="2"/>
<path d="M481.09 904.66L485.59 909.16L481.09 913.66L476.59 909.16Z" fill="#FFF8C4" stroke="#FFFEF0" stroke-width="1"/>
<path d="M481.09 971.74V981.74M476.09 976.74H486.09" stroke="#FDE0A6" stroke-width="2"/>
<path d="M589.41 904.66L593.91 909.16L589.41 913.66L584.91 909.16Z" fill="#FFF8C4" stroke="#FFFEF0" stroke-width="1"/>
<path d="M589.41 971.74V981.74M584.41 976.74H594.41" stroke="#FDE0A6" stroke-width="2"/>
<path d="M697.72 904.66L702.22 909.16L697.72 913.66L693.22 909.16Z" fill="#FFF8C4" stroke="#FFFEF0" stroke-width="1"/>
<path d="M697.72 971.74V981.74M692.72 976.74H702.72" stroke="#FDE0A6" stroke-width="2"/>
<path d="M806.03 904.66L810.53 909.16L806.03 913.66L801.53 909.16Z" fill="#FFF8C4" stroke="#FFFEF0" stroke-width="1"/>
<path d="M806.03 971.74V981.74M801.03 976.74H811.03" stroke="#FDE0A6" stroke-width="2"/>
<path d="M914.34 904.66L918.84 909.16L914.34 913.66L909.84 909.16Z" fill="#FFF8C4" stroke="#FFFEF0" stroke-width="1"/>
<path d="M914.34 971.74V981.74M909.34 976.74H919.34" stroke="#FDE0A6" stroke-width="2"/>
<path d="M1022.66 904.66L1027.16 909.16L1022.66 913.66L1018.16 909.16Z" fill="#FFF8C4" stroke="#FFFEF0" stroke-width="1"/>
<path d="M1022.66 971.74V981.74M1017.66 976.74H1027.66" stroke="#FDE0A6" stroke-width="2"/>
<path d="M1130.97 904.66L1135.47 909.16L1130.97 913.66L1126.47 909.16Z" fill="#FFF8C4" stroke="#FFFEF0" stroke-width="1"/>
<path d="M1130.97 971.74V981.74M1125.97 976.74H1135.97" stroke="#FDE0A6" stroke-width="2"/>
<path d="M1239.28 904.66L1243.78 909.16L1239.28 913.66L1234.78 909.16Z" fill="#FFF8C4" stroke="#FFFEF0" stroke-width="1"/>
<path d="M1239.28 971.74V981.74M1234.28 976.74H1244.28" stroke="#FDE0A6" stroke-width="2"/>
<path d="M1347.59 904.66L1352.09 909.16L1347.59 913.66L1343.09 909.16Z" fill="#FFF8C4" stroke="#FFFEF0" stroke-width="1"/>
<path d="M1347.59 971.74V981.74M1342.59 976.74H1352.59" stroke="#FDE0A6" stroke-width="2"/>
<path d="M1455.91 904.66L1460.41 909.16L1455.91 913.66L1451.41 909.16Z" fill="#FFF8C4" stroke="#FFFEF0" stroke-width="1"/>
<path d="M1455.91 971.74V981.74M1450.91 976.74H1460.91" stroke="#FDE0A6" stroke-width="2"/>
<path d="M1564.22 904.66L1568.72 909.16L1564.22 913.66L1559.72 909.16Z" fill="#FFF8C4" stroke="#FFFEF0" stroke-width="1"/>
<path d="M1564.22 971.74V981.74M1559.22 976.74H1569.22" stroke="#FDE0A6" stroke-width="2"/>
<path d="M1672.53 904.66L1677.03 909.16L1672.53 913.66L1668.03 909.16Z" fill="#FFF8C4" stroke="#FFFEF0" stroke-width="1"/>
<path d="M1672.53 971.74V981.74M1667.53 976.74H1677.53" stroke="#FDE0A6" stroke-width="2"/>
<path d="M1780.84 904.66L1785.34 909.16L1780.84 913.66L1776.34 909.16Z" fill="#FFF8C4" stroke="#FFFEF0" stroke-width="1"/>
<path d="M1780.84 971.74V981.74M1775.84 976.74H1785.84" stroke="#FDE0A6" stroke-width="2"/>
<rect x="556.51" y="831.77" width="65.8" height="160.23" fill="#245E63"/>
<rect x="1314.69" y="901.53" width="65.8" height="90.47" fill="#245E63"/>
<circle cx="156.16" cy="829.00" r="4.8" fill="#8FD2AE" stroke="#DDF3E6" stroke-width="1"/>
<circle cx="264.47" cy="829.00" r="4.8" fill="#8FD2AE" stroke="#DDF3E6" stroke-width="1"/>
<circle cx="372.78" cy="829.00" r="4.8" fill="#8FD2AE" stroke="#DDF3E6" stroke-width="1"/>
<circle cx="481.09" cy="829.00" r="4.8" fill="#8FD2AE" stroke="#DDF3E6" stroke-width="1"/>
<circle cx="589.41" cy="829.00" r="4.8" fill="#8FD2AE" stroke="#DDF3E6" stroke-width="1"/>
<circle cx="697.72" cy="829.00" r="4.8" fill="#8FD2AE" stroke="#DDF3E6" stroke-width="1"/>
<circle cx="806.03" cy="829.00" r="4.8" fill="#8FD2AE" stroke="#DDF3E6" stroke-width="1"/>
<circle cx="914.34" cy="829.00" r="4.8" fill="#8FD2AE" stroke="#DDF3E6" stroke-width="1"/>
<circle cx="1022.66" cy="829.00" r="4.8" fill="#8FD2AE" stroke="#DDF3E6" stroke-width="1"/>
<circle cx="1130.97" cy="829.00" r="4.8" fill="#8FD2AE" stroke="#DDF3E6" stroke-width="1"/>
<circle cx="1239.28" cy="829.00" r="4.8" fill="#8FD2AE" stroke="#DDF3E6" stroke-width="1"/>
<circle cx="1347.59" cy="829.00" r="4.8" fill="#8FD2AE" stroke="#DDF3E6" stroke-width="1"/>
<circle cx="1455.91" cy="829.00" r="4.8" fill="#8FD2AE" stroke="#DDF3E6" stroke-width="1"/>
<circle cx="1564.22" cy="829.00" r="4.8" fill="#8FD2AE" stroke="#DDF3E6" stroke-width="1"/>
<circle cx="1672.53" cy="829.00" r="4.8" fill="#8FD2AE" stroke="#DDF3E6" stroke-width="1"/>
<circle cx="1780.84" cy="829.00" r="4.8" fill="#8FD2AE" stroke="#DDF3E6" stroke-width="1"/>
<polyline points="156.16,988.73 264.47,997.45 372.78,1006.17 481.09,1013.80 589.41,879.73 697.72,879.73 806.03,879.73 914.34,918.97 1022.66,927.69 1130.97,936.41 1239.28,945.13 1347.59,879.73 1455.91,879.73 1564.22,879.73 1672.53,920.06 1780.84,926.60" fill="none" stroke="#623A92" stroke-width="2.9" stroke-linejoin="round"/>
<path d="M150.66 983.73H161.66L156.16 994.53Z" fill="#6F3A9E" stroke="#F3ECF8" stroke-width="1.2" stroke-linejoin="round"/>
<path d="M258.97 992.45H269.97L264.47 1003.25Z" fill="#6F3A9E" stroke="#F3ECF8" stroke-width="1.2" stroke-linejoin="round"/>
<path d="M367.28 1001.17H378.28L372.78 1011.97Z" fill="#6F3A9E" stroke="#F3ECF8" stroke-width="1.2" stroke-linejoin="round"/>
<path d="M475.59 1008.80H486.59L481.09 1019.60Z" fill="#6F3A9E" stroke="#F3ECF8" stroke-width="1.2" stroke-linejoin="round"/>
<path d="M583.91 874.73H594.91L589.41 885.53Z" fill="#6F3A9E" stroke="#F3ECF8" stroke-width="1.2" stroke-linejoin="round"/>
<path d="M692.22 874.73H703.22L697.72 885.53Z" fill="#6F3A9E" stroke="#F3ECF8" stroke-width="1.2" stroke-linejoin="round"/>
<path d="M800.53 874.73H811.53L806.03 885.53Z" fill="#6F3A9E" stroke="#F3ECF8" stroke-width="1.2" stroke-linejoin="round"/>
<path d="M908.84 913.97H919.84L914.34 924.77Z" fill="#6F3A9E" stroke="#F3ECF8" stroke-width="1.2" stroke-linejoin="round"/>
<path d="M1017.16 922.69H1028.16L1022.66 933.49Z" fill="#6F3A9E" stroke="#F3ECF8" stroke-width="1.2" stroke-linejoin="round"/>
<path d="M1125.47 931.41H1136.47L1130.97 942.21Z" fill="#6F3A9E" stroke="#F3ECF8" stroke-width="1.2" stroke-linejoin="round"/>
<path d="M1233.78 940.13H1244.78L1239.28 950.93Z" fill="#6F3A9E" stroke="#F3ECF8" stroke-width="1.2" stroke-linejoin="round"/>
<path d="M1342.09 874.73H1353.09L1347.59 885.53Z" fill="#6F3A9E" stroke="#F3ECF8" stroke-width="1.2" stroke-linejoin="round"/>
<path d="M1450.41 874.73H1461.41L1455.91 885.53Z" fill="#6F3A9E" stroke="#F3ECF8" stroke-width="1.2" stroke-linejoin="round"/>
<path d="M1558.72 874.73H1569.72L1564.22 885.53Z" fill="#6F3A9E" stroke="#F3ECF8" stroke-width="1.2" stroke-linejoin="round"/>
<path d="M1667.03 915.06H1678.03L1672.53 925.86Z" fill="#6F3A9E" stroke="#F3ECF8" stroke-width="1.2" stroke-linejoin="round"/>
<path d="M1775.34 921.60H1786.34L1780.84 932.40Z" fill="#6F3A9E" stroke="#F3ECF8" stroke-width="1.2" stroke-linejoin="round"/>
<text x="91.5" y="799.00" font-size="12" fill="#504C49" text-anchor="end" font-family="Liberation Sans" letter-spacing="0.2">180</text>
<text x="91.5" y="831.70" font-size="12" fill="#504C49" text-anchor="end" font-family="Liberation Sans" letter-spacing="0.2">150</text>
<text x="91.5" y="864.40" font-size="12" fill="#504C49" text-anchor="end" font-family="Liberation Sans" letter-spacing="0.2">120</text>
<text x="91.5" y="897.10" font-size="12" fill="#504C49" text-anchor="end" font-family="Liberation Sans" letter-spacing="0.2">90</text>
<text x="91.5" y="929.80" font-size="12" fill="#504C49" text-anchor="end" font-family="Liberation Sans" letter-spacing="0.2">60</text>
<text x="91.5" y="962.50" font-size="12" fill="#504C49" text-anchor="end" font-family="Liberation Sans" letter-spacing="0.2">30</text>
<text x="91.5" y="995.20" font-size="12" fill="#504C49" text-anchor="end" font-family="Liberation Sans" letter-spacing="0.2">0</text>
<text x="91.5" y="1027.90" font-size="12" fill="#504C49" text-anchor="end" font-family="Liberation Sans" letter-spacing="0.2">-30</text>
<text x="156.16" y="1046" font-size="12" fill="#4C4845" text-anchor="middle" font-family="Liberation Sans">1<tspan dx="1.1" dy="1.6" font-size="15">/</tspan><tspan dx="1.1" dy="-1.6">3</tspan><tspan dx="1.1" dy="1.6" font-size="15">/</tspan><tspan dx="1.1" dy="-1.6">28</tspan></text>
<text x="264.47" y="1046" font-size="12" fill="#4C4845" text-anchor="middle" font-family="Liberation Sans">1<tspan dx="1.1" dy="1.6" font-size="15">/</tspan><tspan dx="1.1" dy="-1.6">4</tspan><tspan dx="1.1" dy="1.6" font-size="15">/</tspan><tspan dx="1.1" dy="-1.6">28</tspan></text>
<text x="372.78" y="1046" font-size="12" fill="#4C4845" text-anchor="middle" font-family="Liberation Sans">1<tspan dx="1.1" dy="1.6" font-size="15">/</tspan><tspan dx="1.1" dy="-1.6">5</tspan><tspan dx="1.1" dy="1.6" font-size="15">/</tspan><tspan dx="1.1" dy="-1.6">28</tspan></text>
<text x="481.09" y="1046" font-size="12" fill="#4C4845" text-anchor="middle" font-family="Liberation Sans">1<tspan dx="1.1" dy="1.6" font-size="15">/</tspan><tspan dx="1.1" dy="-1.6">6</tspan><tspan dx="1.1" dy="1.6" font-size="15">/</tspan><tspan dx="1.1" dy="-1.6">28</tspan></text>
<text x="589.41" y="1046" font-size="12" fill="#4C4845" text-anchor="middle" font-family="Liberation Sans">1<tspan dx="1.1" dy="1.6" font-size="15">/</tspan><tspan dx="1.1" dy="-1.6">7</tspan><tspan dx="1.1" dy="1.6" font-size="15">/</tspan><tspan dx="1.1" dy="-1.6">28</tspan></text>
<text x="697.72" y="1046" font-size="12" fill="#4C4845" text-anchor="middle" font-family="Liberation Sans">1<tspan dx="1.1" dy="1.6" font-size="15">/</tspan><tspan dx="1.1" dy="-1.6">8</tspan><tspan dx="1.1" dy="1.6" font-size="15">/</tspan><tspan dx="1.1" dy="-1.6">28</tspan></text>
<text x="806.03" y="1046" font-size="12" fill="#4C4845" text-anchor="middle" font-family="Liberation Sans">1<tspan dx="1.1" dy="1.6" font-size="15">/</tspan><tspan dx="1.1" dy="-1.6">9</tspan><tspan dx="1.1" dy="1.6" font-size="15">/</tspan><tspan dx="1.1" dy="-1.6">28</tspan></text>
<text x="914.34" y="1046" font-size="12" fill="#4C4845" text-anchor="middle" font-family="Liberation Sans">1<tspan dx="1.1" dy="1.6" font-size="15">/</tspan><tspan dx="1.1" dy="-1.6">10</tspan><tspan dx="1.1" dy="1.6" font-size="15">/</tspan><tspan dx="1.1" dy="-1.6">28</tspan></text>
<text x="1022.66" y="1046" font-size="12" fill="#4C4845" text-anchor="middle" font-family="Liberation Sans">1<tspan dx="1.1" dy="1.6" font-size="15">/</tspan><tspan dx="1.1" dy="-1.6">11</tspan><tspan dx="1.1" dy="1.6" font-size="15">/</tspan><tspan dx="1.1" dy="-1.6">28</tspan></text>
<text x="1130.97" y="1046" font-size="12" fill="#4C4845" text-anchor="middle" font-family="Liberation Sans">1<tspan dx="1.1" dy="1.6" font-size="15">/</tspan><tspan dx="1.1" dy="-1.6">12</tspan><tspan dx="1.1" dy="1.6" font-size="15">/</tspan><tspan dx="1.1" dy="-1.6">28</tspan></text>
<text x="1239.28" y="1046" font-size="12" fill="#4C4845" text-anchor="middle" font-family="Liberation Sans">1<tspan dx="1.1" dy="1.6" font-size="15">/</tspan><tspan dx="1.1" dy="-1.6">13</tspan><tspan dx="1.1" dy="1.6" font-size="15">/</tspan><tspan dx="1.1" dy="-1.6">28</tspan></text>
<text x="1347.59" y="1046" font-size="12" fill="#4C4845" text-anchor="middle" font-family="Liberation Sans">1<tspan dx="1.1" dy="1.6" font-size="15">/</tspan><tspan dx="1.1" dy="-1.6">14</tspan><tspan dx="1.1" dy="1.6" font-size="15">/</tspan><tspan dx="1.1" dy="-1.6">28</tspan></text>
<text x="1455.91" y="1046" font-size="12" fill="#4C4845" text-anchor="middle" font-family="Liberation Sans">1<tspan dx="1.1" dy="1.6" font-size="15">/</tspan><tspan dx="1.1" dy="-1.6">15</tspan><tspan dx="1.1" dy="1.6" font-size="15">/</tspan><tspan dx="1.1" dy="-1.6">28</tspan></text>
<text x="1564.22" y="1046" font-size="12" fill="#4C4845" text-anchor="middle" font-family="Liberation Sans">1<tspan dx="1.1" dy="1.6" font-size="15">/</tspan><tspan dx="1.1" dy="-1.6">16</tspan><tspan dx="1.1" dy="1.6" font-size="15">/</tspan><tspan dx="1.1" dy="-1.6">28</tspan></text>
<text x="1672.53" y="1046" font-size="12" fill="#4C4845" text-anchor="middle" font-family="Liberation Sans">1<tspan dx="1.1" dy="1.6" font-size="15">/</tspan><tspan dx="1.1" dy="-1.6">17</tspan><tspan dx="1.1" dy="1.6" font-size="15">/</tspan><tspan dx="1.1" dy="-1.6">28</tspan></text>
<text x="1780.84" y="1046" font-size="12" fill="#4C4845" text-anchor="middle" font-family="Liberation Sans">1<tspan dx="1.1" dy="1.6" font-size="15">/</tspan><tspan dx="1.1" dy="-1.6">18</tspan><tspan dx="1.1" dy="1.6" font-size="15">/</tspan><tspan dx="1.1" dy="-1.6">28</tspan></text>
</svg>
<div class="a" style="left:1905px;top:138px;width:1px;height:942px;background:#E4E2E0"></div>
<div class="a" style="left:1909px;top:141px;width:8px;height:945px;border-radius:4px;background:#C2C0BE"></div>
<div class="a" style="left:1876px;top:1036px;width:44px;height:44px;background:#C73D2A"></div>
<svg style="left:1884px;top:1046px" width="28" height="26" viewBox="0 0 28 26"><path d="M4.5 1.2H23.5a2.5 2.5 0 0 1 2.5 2.5V15.4a2.5 2.5 0 0 1-2.5 2.5H9L2.6 23.8V3.7a2.5 2.5 0 0 1 1.9-2.5Z" fill="#fff"/><g fill="#B8392A"><circle cx="7.6" cy="9.6" r="2.2"/><circle cx="14.6" cy="9.6" r="2.2"/><circle cx="21.6" cy="9.6" r="2.2"/></g></svg>
</body></html>
